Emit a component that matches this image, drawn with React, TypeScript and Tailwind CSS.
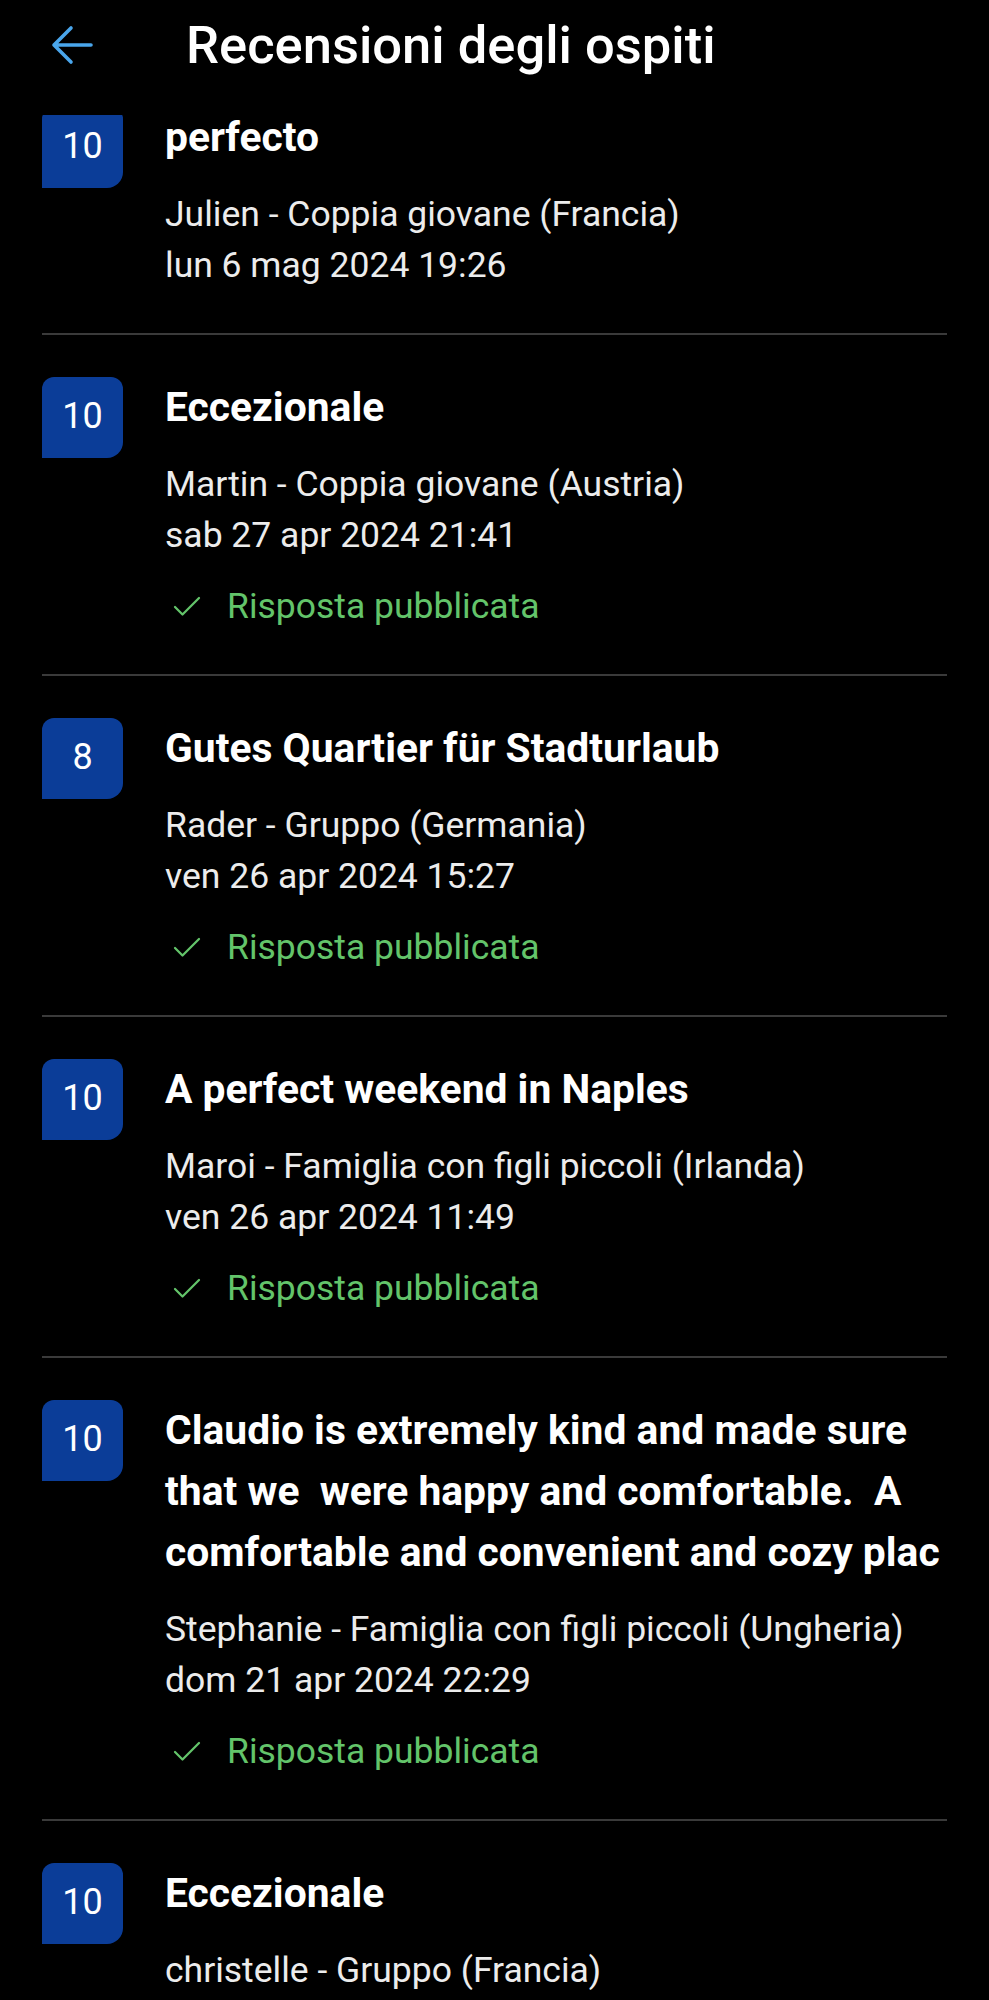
import { Check } from "lucide-react";

type Review = {
  score: number;
  title: string;
  guest: string;
  date?: string;
  replied: boolean;
};

const reviews: Review[] = [
  {
    score: 10,
    title: "perfecto",
    guest: "Julien - Coppia giovane (Francia)",
    date: "lun 6 mag 2024 19:26",
    replied: false,
  },
  {
    score: 10,
    title: "Eccezionale",
    guest: "Martin - Coppia giovane (Austria)",
    date: "sab 27 apr 2024 21:41",
    replied: true,
  },
  {
    score: 8,
    title: "Gutes Quartier für Stadturlaub",
    guest: "Rader - Gruppo (Germania)",
    date: "ven 26 apr 2024 15:27",
    replied: true,
  },
  {
    score: 10,
    title: "A perfect weekend in Naples",
    guest: "Maroi - Famiglia con figli piccoli (Irlanda)",
    date: "ven 26 apr 2024 11:49",
    replied: true,
  },
  {
    score: 10,
    title:
      "Claudio is extremely kind and made sure that we  were happy and comfortable.  A comfortable and convenient and cozy plac",
    guest: "Stephanie - Famiglia con figli piccoli (Ungheria)",
    date: "dom 21 apr 2024 22:29",
    replied: true,
  },
  {
    score: 10,
    title: "Eccezionale",
    guest: "christelle - Gruppo (Francia)",
    replied: false,
  },
];

function BackArrow() {
  return (
    <svg width="44" height="44" viewBox="0 0 44 44" fill="none" className="text-[#4aa6ec]">
      <path
        d="M41 22H4M21 5L4 22L21 39"
        stroke="currentColor"
        strokeWidth="3.6"
        strokeLinecap="round"
        strokeLinejoin="round"
      />
    </svg>
  );
}

function ReviewRow({ review, first }: { review: Review; first: boolean }) {
  return (
    <div className={first ? "" : "border-t-2 border-[#3a3a3a] pt-[42px]"}>
      <div className="flex gap-[42px] pb-[42px]">
        <div className="w-[81px] h-[81px] shrink-0 rounded-tl-[12px] rounded-tr-[12px] rounded-br-[16px] bg-[#0b3d98] flex justify-center pt-[17px]">
          <span className="text-[36px] leading-[44px] text-white">{review.score}</span>
        </div>
        <div className="flex-1 min-w-0 -mr-[10px]">
          <p className="text-[40.8px] leading-[61px] font-bold text-white whitespace-pre-wrap break-words">
            {review.title}
          </p>
          <div className="mt-[21px] text-[35.5px] leading-[51px] text-[#ececec]">
            <p>{review.guest}</p>
            {review.date && <p>{review.date}</p>}
          </div>
          {review.replied && (
            <div className="mt-[20px] flex items-center gap-[22px] text-[35.5px] leading-[51px] text-[#63c46a]">
              <Check size={36} strokeWidth={1.5} className="ml-[4px]" />
              <span>Risposta pubblicata</span>
            </div>
          )}
        </div>
      </div>
    </div>
  );
}

export default function App() {
  return (
    <div className="w-[989px] h-[2000px] bg-black overflow-hidden font-['Roboto',sans-serif]">
      <header className="relative z-10 h-[115px] bg-black flex items-start pt-[14px]">
        <div className="w-[186px] flex pl-[50px] pt-[9px]">
          <BackArrow />
        </div>
        <h1 className="text-[52.5px] leading-[62px] font-medium text-white">
          Recensioni degli ospiti
        </h1>
      </header>
      <div className="-mt-[8px] px-[42px]">
        {reviews.map((r, i) => (
          <ReviewRow key={i} review={r} first={i === 0} />
        ))}
      </div>
    </div>
  );
}
